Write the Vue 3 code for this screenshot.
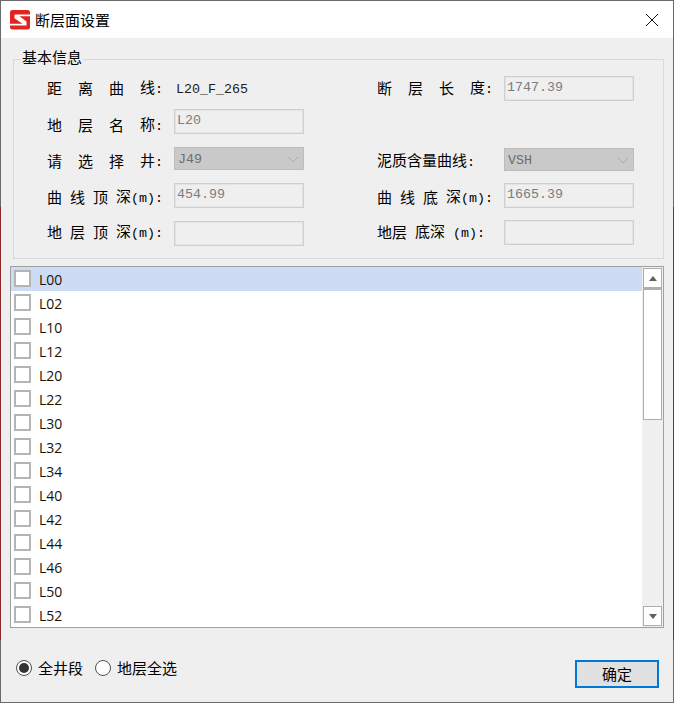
<script setup>
const rows = [
  [
    { wide: true, t: ['距', '离', '曲', '线'], s: ':', kind: 'text', value: 'L20_F_265' },
    { wide: true, t: ['断', '层', '长', '度'], s: ':', kind: 'input', value: '1747.39' },
  ],
  [
    { wide: true, t: ['地', '层', '名', '称'], s: ':', kind: 'input', value: 'L20' },
    { kind: 'none' },
  ],
  [
    { wide: true, t: ['请', '选', '择', '井'], s: ':', kind: 'select', value: 'J49' },
    { t: ['泥质含量曲线'], s: ':', kind: 'select', value: 'VSH', nudge: true },
  ],
  [
    { t: ['曲', '线', '顶', '深'], s: '(m):', kind: 'input', value: '454.99' },
    { t: ['曲', '线', '底', '深'], s: '(m):', kind: 'input', value: '1665.39' },
  ],
  [
    { t: ['地', '层', '顶', '深'], s: '(m):', kind: 'input', value: '', nudge: true },
    { t: ['地层', '底深'], s: ' (m):', kind: 'input', value: '' },
  ],
]
const layers = ['L00', 'L02', 'L10', 'L12', 'L20', 'L22', 'L30', 'L32', 'L34', 'L40', 'L42', 'L44', 'L46', 'L50', 'L52']
</script>

<template>
  <div class="window">
    <div class="dialog">
      <header class="titlebar">
        <svg class="logo" viewBox="0 0 20 20" width="20" height="20">
          <rect x="0" y="0" width="20" height="19.5" rx="2.5" fill="#e3231f" />
          <path d="M4.5 4.5H20V6.3H9.5L16.5 11.5V15.6H0V13.8H12.5L4.5 8.2Z" fill="#fff" />
        </svg>
        <span class="title">断层面设置</span>
        <svg class="close" viewBox="0 0 14 14" width="14" height="14">
          <path d="M1 1L13 13M13 1L1 13" stroke="#111" stroke-width="1" fill="none" />
        </svg>
      </header>

      <main class="content">
        <section class="group">
          <span class="legend">基本信息</span>
          <div class="grid">
            <template v-for="(row, ri) in rows" :key="ri">
              <div v-for="(f, fi) in row" :key="fi" class="field" :class="'r' + ri">
                <template v-if="f.kind !== 'none'">
                  <div class="label" :class="{ wide: f.wide }">
                    <span v-for="(c, ci) in f.t" :key="ci" class="tok">{{ c }}<span v-if="ci === f.t.length - 1" class="lat">{{ f.s }}</span></span>
                  </div>
                  <span v-if="f.kind === 'text'" class="plain">{{ f.value }}</span>
                  <div v-else-if="f.kind === 'input'" class="input" :class="{ nudge: f.nudge }">{{ f.value }}</div>
                  <div v-else class="select" :class="{ nudge: f.nudge }">
                    <span>{{ f.value }}</span>
                    <svg width="12" height="7" viewBox="0 0 12 7"><path d="M1 1L6 6L11 1" stroke="#ababab" fill="none" /></svg>
                  </div>
                </template>
              </div>
            </template>
          </div>
        </section>

        <section class="list">
          <div class="rows">
            <div v-for="(l, i) in layers" :key="l" class="row" :class="{ sel: i === 0 }">
              <span class="check"></span>
              <span class="name">{{ l }}</span>
            </div>
          </div>
          <div class="scrollbar">
            <div class="sbtn"><i class="up"></i></div>
            <div class="thumb"></div>
            <div class="track"></div>
            <div class="sbtn"><i class="down"></i></div>
          </div>
        </section>

        <footer class="footer">
          <div class="radios">
            <span class="radio on"></span><span class="rlabel first">全井段</span>
            <span class="radio"></span><span class="rlabel">地层全选</span>
          </div>
          <div class="ok">确定</div>
        </footer>
      </main>
    </div>
  </div>
</template>

<style scoped>
.window {
  width: 674px;
  height: 703px;
  padding: 1px;
  box-sizing: border-box;
  background: linear-gradient(to bottom, #6a6a6a 0 207px, #8c2a2a 207px 640px, #6a6a6a 640px);
  font-family: "Noto Sans CJK SC", "Noto Sans", sans-serif;
  color: #000;
}
.dialog {
  height: 100%;
  display: flex;
  flex-direction: column;
  background: #efefef;
}
.titlebar {
  height: 37px;
  flex: none;
  background: #fff;
  display: flex;
  align-items: center;
  padding-left: 9px;
  padding-right: 14px;
}
.logo { flex: none; }
.title {
  margin-left: 5px;
  font-size: 15px;
  line-height: 20px;
  flex: 1;
}
.close { flex: none; }
.content {
  flex: 1;
  display: flex;
  flex-direction: column;
  min-height: 0;
}
.group {
  position: relative;
  margin: 21px 9px 0 12px;
  height: 200px;
  box-sizing: border-box;
  border: 1px solid #d9d9d9;
  padding: 16px 0 0 33px;
  flex: none;
}
.legend {
  position: absolute;
  left: 7px;
  top: -13px;
  padding: 0 1px;
  font-size: 15px;
  line-height: 20px;
  background: #efefef;
  height: 18px;
}
.grid {
  display: grid;
  grid-template-columns: 257px 257px;
  column-gap: 73px;
  grid-template-rows: 33px 38px 36px 37px 26px;
  font-family: "Liberation Mono", "Noto Sans CJK SC", monospace;
}
.field {
  display: flex;
  align-items: flex-start;
  font-size: 13.33px;
}
.nudge { margin-top: 1px; }
.label {
  width: 127px;
  flex: none;
  height: 25px;
  display: flex;
  align-items: center;
  gap: 8px;
  font-size: 15px;
  white-space: pre;
}
.r0 .label { margin-top: -1px; }
.r1 .label { margin-top: 3px; }
.r2 .label { margin-top: 1px; }
.r3 .label { margin-top: 1px; }
.r4 .label { margin-top: -1px; }
.label.wide { gap: 16px; }
.tok { font-family: "Noto Sans CJK SC", sans-serif; line-height: 25px; }
.lat {
  font-family: "Liberation Mono", monospace;
  font-size: 13.33px;
}
.plain {
  line-height: 25px;
  padding-left: 2px;
  padding-top: 1px;
  color: #1c1c1c;
}
.input {
  width: 130px;
  flex: none;
  height: 25px;
  box-sizing: border-box;
  border: 1px solid #cfcfcf;
  outline: 1px solid #e4e4e4;
  outline-offset: -2px;
  color: #7c7c7c;
  line-height: 21px;
  padding-left: 2px;
}
.select {
  width: 130px;
  flex: none;
  height: 23px;
  box-sizing: border-box;
  border: 1px solid #bcbcbc;
  background: #c9c9c9;
  color: #6d6d6d;
  display: flex;
  align-items: center;
  justify-content: space-between;
  padding: 1px 4px 0 3px;
}
.list {
  margin: 7px 9px 0 9px;
  height: 362px;
  box-sizing: border-box;
  border: 1px solid #a0a0a0;
  background: #fff;
  display: flex;
  flex: none;
  overflow: hidden;
}
.rows { flex: 1; min-width: 0; }
.row {
  height: 24px;
  display: flex;
  align-items: center;
  gap: 8px;
  padding-left: 3px;
  font-family: "Open Sans", "Noto Sans", sans-serif;
  font-size: 14px;
}
.row.sel { background: #cddbf4; }
.check {
  width: 17px;
  height: 17px;
  box-sizing: border-box;
  border: 2px solid #b4b4b4;
  background: #fff;
  flex: none;
  margin-top: -1px;
}
.name { color: #1a1208; }
.scrollbar {
  width: 21px;
  flex: none;
  background: #f0f0f0;
  padding: 1px;
  box-sizing: border-box;
  display: flex;
  flex-direction: column;
}
.sbtn {
  height: 20px;
  flex: none;
  box-sizing: border-box;
  border: 1px solid #adadad;
  background: #fff;
  display: flex;
  align-items: center;
  justify-content: center;
}
.up, .down {
  width: 0;
  height: 0;
  border-left: 4px solid transparent;
  border-right: 4px solid transparent;
}
.up { border-bottom: 5px solid #606060; }
.down { border-top: 5px solid #606060; }
.thumb {
  height: 132px;
  flex: none;
  box-sizing: border-box;
  border: 1px solid #adadad;
  border-top-width: 2px;
  background: #fff;
}
.track { flex: 1; }
.footer {
  flex: 1;
  display: flex;
  align-items: flex-start;
  justify-content: space-between;
  padding: 32px 14px 0 15px;
}
.radios {
  display: flex;
  align-items: center;
  height: 16px;
  font-size: 15px;
}
.radio {
  width: 16px;
  height: 16px;
  box-sizing: border-box;
  border: 1px solid #4f4f4f;
  border-radius: 50%;
  background: #fff;
  flex: none;
  display: flex;
  align-items: center;
  justify-content: center;
}
.radio.on::after {
  content: "";
  width: 10px;
  height: 10px;
  border-radius: 50%;
  background: #333;
}
.rlabel { margin-left: 6px; line-height: 16px; }
.rlabel.first { margin-right: 12px; }
.ok {
  width: 84px;
  height: 28px;
  box-sizing: border-box;
  border: 2px solid #0078d7;
  background: #e1e1e1;
  font-size: 15px;
  line-height: 24px;
  text-align: center;
}
</style>

<style>
html, body { margin: 0; background: #efefef; overflow: hidden; }
</style>
